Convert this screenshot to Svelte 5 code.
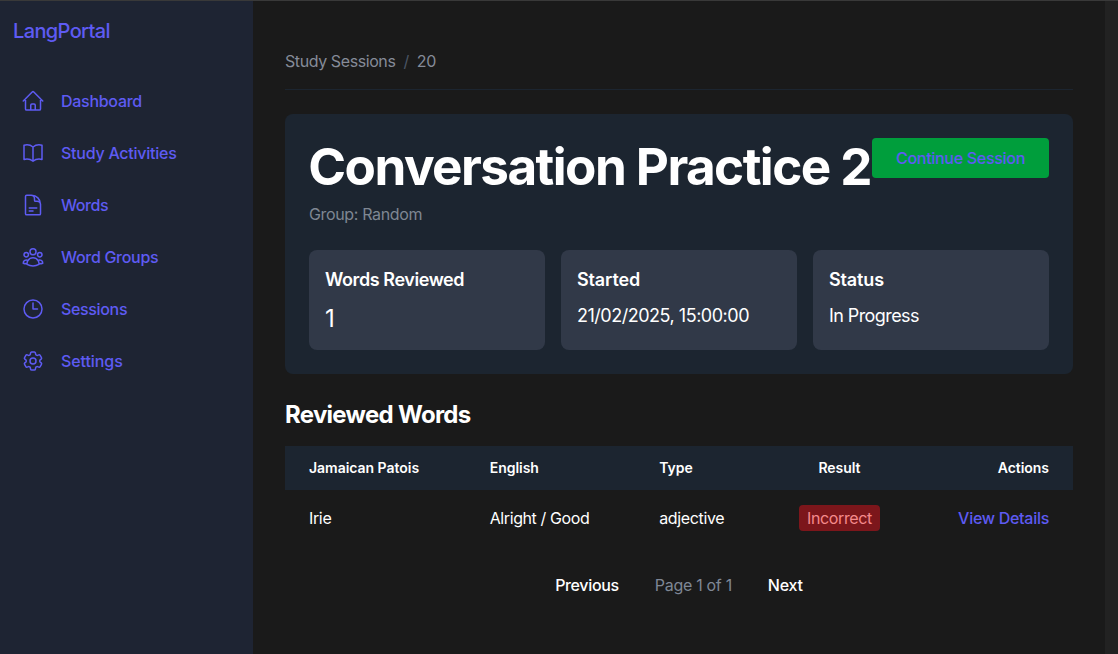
<script>
  const nav = [
    { label: 'Dashboard', ls: -0.28, d: 'm2.25 12 8.954-8.955c.44-.439 1.152-.439 1.591 0L21.75 12M4.5 9.75v10.125c0 .621.504 1.125 1.125 1.125H9.75v-4.875c0-.621.504-1.125 1.125-1.125h2.25c.621 0 1.125.504 1.125 1.125V21h4.125c.621 0 1.125-.504 1.125-1.125V9.75M8.25 21h8.25' },
    { label: 'Study Activities', ls: -0.25, d: 'M12 6.042A8.967 8.967 0 0 0 6 3.75c-1.052 0-2.062.18-3 .512v14.25A8.987 8.987 0 0 1 6 18c2.305 0 4.408.867 6 2.292m0-14.25a8.966 8.966 0 0 1 6-2.292c1.052 0 2.062.18 3 .512v14.25A8.987 8.987 0 0 0 18 18a8.967 8.967 0 0 0-6 2.292m0-14.25v14.25' },
    { label: 'Words', ls: -0.4, d: 'M19.5 14.25v-2.625a3.375 3.375 0 0 0-3.375-3.375h-1.5A1.125 1.125 0 0 1 13.5 7.125v-1.5a3.375 3.375 0 0 0-3.375-3.375H8.25m0 12.75h7.5m-7.5 3H12M10.5 2.25H5.625c-.621 0-1.125.504-1.125 1.125v17.25c0 .621.504 1.125 1.125 1.125h12.75c.621 0 1.125-.504 1.125-1.125V11.25a9 9 0 0 0-9-9Z' },
    { label: 'Word Groups', ls: -0.3, d: 'M18 18.72a9.094 9.094 0 0 0 3.741-.479 3 3 0 0 0-4.682-2.72m.94 3.198.001.031c0 .225-.012.447-.037.666A11.944 11.944 0 0 1 12 21c-2.17 0-4.207-.576-5.963-1.584A6.062 6.062 0 0 1 6 18.719m12 0a5.971 5.971 0 0 0-.941-3.197m0 0A5.995 5.995 0 0 0 12 12.75a5.995 5.995 0 0 0-5.058 2.772m0 0a3 3 0 0 0-4.681 2.72 8.986 8.986 0 0 0 3.74.477m.94-3.197a5.971 5.971 0 0 0-.94 3.197M15 6.75a3 3 0 1 1-6 0 3 3 0 0 1 6 0Zm6 3a2.25 2.25 0 1 1-4.5 0 2.25 2.25 0 0 1 4.5 0Zm-13.5 0a2.25 2.25 0 1 1-4.5 0 2.25 2.25 0 0 1 4.5 0Z' },
    { label: 'Sessions', ls: -0.34, d: 'M12 6v6h4.5m4.5 0a9 9 0 1 1-18 0 9 9 0 0 1 18 0Z' },
    { label: 'Settings', ls: -0.08, d: 'M9.594 3.94c.09-.542.56-.94 1.11-.94h2.593c.55 0 1.02.398 1.11.94l.213 1.281c.063.374.313.686.645.87.074.04.147.083.22.127.325.196.72.257 1.075.124l1.217-.456a1.125 1.125 0 0 1 1.37.49l1.296 2.247a1.125 1.125 0 0 1-.26 1.431l-1.003.827c-.293.241-.438.613-.43.992a7.723 7.723 0 0 1 0 .255c-.008.378.137.75.43.991l1.004.827c.424.35.534.955.26 1.43l-1.298 2.247a1.125 1.125 0 0 1-1.369.491l-1.217-.456c-.355-.133-.75-.072-1.076.124a6.47 6.47 0 0 1-.22.128c-.331.183-.581.495-.644.869l-.213 1.281c-.09.543-.56.94-1.11.94h-2.594c-.55 0-1.019-.398-1.11-.94l-.213-1.281c-.062-.374-.312-.686-.644-.87a6.52 6.52 0 0 1-.22-.127c-.325-.196-.72-.257-1.076-.124l-1.217.456a1.125 1.125 0 0 1-1.369-.49l-1.297-2.247a1.125 1.125 0 0 1 .26-1.431l1.004-.827c.292-.24.437-.613.43-.991a6.932 6.932 0 0 1 0-.255c.007-.38-.138-.751-.43-.992l-1.004-.827a1.125 1.125 0 0 1-.26-1.43l1.297-2.247a1.125 1.125 0 0 1 1.37-.491l1.216.456c.356.133.751.072 1.076-.124.072-.044.146-.086.22-.128.332-.183.582-.495.644-.869l.214-1.28ZM15 12a3 3 0 1 1-6 0 3 3 0 0 1 6 0Z' }
  ];
</script>

<div class="app">
  <aside>
    <a class="brand" href="#home">LangPortal</a>
    <nav>
      {#each nav as item}
        <a href="#nav">
          <svg viewBox="0 0 24 24"><path d={item.d} /></svg>
          <span style:letter-spacing="{item.ls}px">{item.label}</span>
        </a>
      {/each}
    </nav>
  </aside>
  <main>
    <div class="crumbs"><span>Study Sessions</span><span class="slash">/</span><span>20</span></div>
    <section class="card">
      <div class="head">
        <div>
          <h1>Conversation Practice 2</h1>
          <p class="group">Group: Random</p>
        </div>
        <a class="continue" href="#continue">Continue Session</a>
      </div>
      <div class="stats">
        <div class="stat"><h3 class="reviewed">Words Reviewed</h3><p class="big">1</p></div>
        <div class="stat"><h3>Started</h3><p class="date">21/02/2025, 15:00:00</p></div>
        <div class="stat"><h3>Status</h3><p>In Progress</p></div>
      </div>
    </section>
    <h2>Reviewed Words</h2>
    <div class="table">
      <div class="row th"><span>Jamaican Patois</span><span>English</span><span>Type</span><span class="mid">Result</span><span class="end">Actions</span></div>
      <div class="row td"><span>Irie</span><span class="english">Alright / Good</span><span>adjective</span><span class="mid"><em>Incorrect</em></span><span class="end"><a href="#details">View Details</a></span></div>
    </div>
    <div class="pager"><button>Previous</button><span>Page 1 of 1</span><button class="next">Next</button></div>
  </main>
  <div class="gutter"></div>
</div>

<style>
  :global(body) { background: #1a1a1a; overflow: hidden; }
  .app { box-sizing: border-box; display: flex; height: 654px; border-top: 1px solid #393939; background: #1a1a1a; color: #fff; font: 400 16px/24px Inter, sans-serif; letter-spacing: -0.35px; }
  a { color: #5e5bf3; text-decoration: none; font-weight: 500; }
  h1, h2, h3, p { margin: 0; }
  aside { box-sizing: border-box; width: 253px; flex: none; background: #1e2433; padding: 16px 13px; }
  .brand { display: block; font-size: 20px; line-height: 28px; letter-spacing: -0.63px; }
  nav { display: flex; flex-direction: column; gap: 4px; padding-top: 32px; }
  nav a { display: flex; align-items: center; gap: 16px; height: 48px; padding-left: 8px; }
  svg { width: 24px; height: 24px; fill: none; stroke: currentColor; stroke-width: 1.5; stroke-linecap: round; stroke-linejoin: round; }
  main { width: 788px; flex: none; padding: 48px 32px 0; }
  .crumbs { display: flex; gap: 8px; height: 40px; border-bottom: 1px solid #1c2530; color: #858b98; letter-spacing: -0.41px; }
  .slash { color: #4a5565; }
  .card { box-sizing: border-box; height: 260px; margin-top: 24px; padding: 24px; border-radius: 8px; background: #1c2530; }
  .head { display: flex; justify-content: space-between; align-items: flex-start; height: 112px; }
  h1 { font-size: 51.2px; line-height: 56px; font-weight: 700; white-space: nowrap; width: 563px; letter-spacing: -1.56px; text-indent: -0.7px; }
  .group { color: #7f8793; margin-top: 8px; }
  .continue { box-sizing: border-box; width: 177px; height: 40px; border-radius: 4px; background: #009e3c; line-height: 40px; text-align: center; flex: none; white-space: nowrap; letter-spacing: -0.3px; }
  .stats { display: grid; grid-template-columns: repeat(3, 1fr); gap: 16px; }
  .stat { box-sizing: border-box; height: 100px; padding: 16px; border-radius: 8px; background: #313948; font-size: 18px; line-height: 28px; letter-spacing: -0.58px; }
  .date { letter-spacing: -0.48px; }
  h3 { font-size: 18px; line-height: 28px; font-weight: 600; margin-bottom: 8px; letter-spacing: -0.14px; }
  .reviewed { letter-spacing: -0.42px; }
  .big { font-size: 24px; line-height: 34px; }
  h2 { font-size: 24px; line-height: 32px; font-weight: 700; margin: 25px 0 15px; letter-spacing: -0.72px; }
  .row { display: grid; grid-template-columns: 180.7px 169.5px 139.8px 81px 1fr; align-items: center; padding: 0 24px; }
  .th { height: 44px; background: #1c2530; font-size: 14px; font-weight: 600; letter-spacing: -0.03px; }
  .td { height: 56px; }
  .english { letter-spacing: -0.4px; }
  .mid { text-align: center; }
  .end { text-align: right; }
  .end a { letter-spacing: -0.28px; }
  em { display: block; font-style: normal; height: 26px; line-height: 26px; border-radius: 4px; background: #7c161b; color: #f58a8c; }
  .pager { display: flex; justify-content: center; gap: 36px; margin-top: 27px; color: #7f8795; letter-spacing: -0.3px; }
  button { all: unset; color: #fff; font-weight: 500; letter-spacing: -0.34px; }
  .next { letter-spacing: -0.2px; }
  .gutter { flex: 1; background: #222; }
</style>
